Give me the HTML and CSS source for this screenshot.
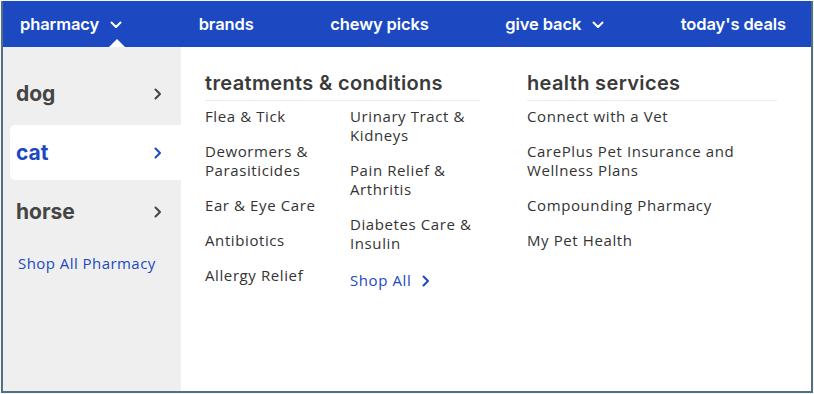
FILE: index.html
```html
<!DOCTYPE html>
<html>
<head>
<meta charset="utf-8">
<link rel="stylesheet" href="styles.css">
</head>
<body>
<div class="frame">
  <nav class="topnav">
    <div class="nav-item active">pharmacy
      <svg class="nav-chev" width="12" height="8" viewBox="0 0 12 8"><path d="M1.5 1.5 L6 6 L10.5 1.5" fill="none" stroke="#fff" stroke-width="2" stroke-linecap="round" stroke-linejoin="round"/></svg>
      <span class="caret"></span>
    </div>
    <div class="nav-item">brands</div>
    <div class="nav-item">chewy picks</div>
    <div class="nav-item">give back
      <svg class="nav-chev" width="12" height="8" viewBox="0 0 12 8"><path d="M1.5 1.5 L6 6 L10.5 1.5" fill="none" stroke="#fff" stroke-width="2" stroke-linecap="round" stroke-linejoin="round"/></svg>
    </div>
    <div class="nav-item">today's deals</div>
  </nav>
  <div class="panel">
    <aside class="sidebar">
      <div class="pet">dog
        <svg width="8" height="12" viewBox="0 0 8 12"><path d="M1.5 1.5 L6 6 L1.5 10.5" fill="none" stroke="currentColor" stroke-width="2" stroke-linecap="round" stroke-linejoin="round"/></svg>
      </div>
      <div class="pet selected">cat
        <svg width="8" height="12" viewBox="0 0 8 12"><path d="M1.5 1.5 L6 6 L1.5 10.5" fill="none" stroke="currentColor" stroke-width="2" stroke-linecap="round" stroke-linejoin="round"/></svg>
      </div>
      <div class="pet">horse
        <svg width="8" height="12" viewBox="0 0 8 12"><path d="M1.5 1.5 L6 6 L1.5 10.5" fill="none" stroke="currentColor" stroke-width="2" stroke-linecap="round" stroke-linejoin="round"/></svg>
      </div>
      <a class="shop-pharmacy">Shop All Pharmacy</a>
    </aside>
    <section class="content">
      <div class="group treatments">
        <h2 class="group-title">treatments &amp; conditions</h2>
        <div class="cols">
          <ul class="links col-a">
            <li>Flea &amp; Tick</li>
            <li>Dewormers &amp; Parasiticides</li>
            <li>Ear &amp; Eye Care</li>
            <li>Antibiotics</li>
            <li>Allergy Relief</li>
          </ul>
          <ul class="links col-b">
            <li>Urinary Tract &amp; Kidneys</li>
            <li>Pain Relief &amp; Arthritis</li>
            <li>Diabetes Care &amp; Insulin</li>
            <li class="shop-all">Shop All
              <svg width="8" height="12" viewBox="0 0 8 12"><path d="M1.5 1.5 L6 6 L1.5 10.5" fill="none" stroke="currentColor" stroke-width="2" stroke-linecap="round" stroke-linejoin="round"/></svg>
            </li>
          </ul>
        </div>
      </div>
      <div class="group services">
        <h2 class="group-title">health services</h2>
        <ul class="links">
          <li>Connect with a Vet</li>
          <li>CarePlus Pet Insurance and Wellness Plans</li>
          <li>Compounding Pharmacy</li>
          <li>My Pet Health</li>
        </ul>
      </div>
    </section>
  </div>
</div>
</body>
</html>
```
FILE: styles.css
```css
* { box-sizing: border-box; }
html, body { margin: 0; padding: 0; background: #f4f6f7; }
body { font-family: "Open Sans", "Liberation Sans", sans-serif; }

.frame {
  width: 812px;
  height: 392px;
  margin: 1px 0 0 1px;
  border: 2px solid #52707e;
  border-top: none;
  background: #fff;
  display: flex;
  flex-direction: column;
  overflow: hidden;
}

.topnav {
  height: 46px;
  flex: none;
  background: #1c49c2;
  display: flex;
  align-items: center;
  justify-content: space-between;
  padding: 0 25px 0 17px;
}
.nav-item {
  position: relative;
  color: #fff;
  font-family: Inter, "Open Sans", sans-serif;
  font-weight: 600;
  font-size: 16.5px;
  letter-spacing: -0.1px;
  display: flex;
  align-items: center;
  gap: 11px;
  height: 46px;
  padding-bottom: 1px;
}
.nav-chev { margin-top: 2px; }
.caret {
  position: absolute;
  bottom: 0;
  right: -3px;
  width: 0;
  height: 0;
  border-left: 8px solid transparent;
  border-right: 8px solid transparent;
  border-bottom: 8px solid #fff;
}

.panel {
  flex: 1;
  display: flex;
}

.sidebar {
  width: 178px;
  flex: none;
  background: #efefef;
  padding: 19px 0 0 7px;
  display: flex;
  flex-direction: column;
  gap: 4px;
}
.pet {
  height: 55px;
  display: flex;
  align-items: center;
  justify-content: space-between;
  padding: 0 19px 0 6px;
  font-family: Inter, "Open Sans", sans-serif;
  font-weight: 700;
  font-size: 21px;
  color: #454545;
  border-radius: 5px 0 0 5px;
}
.pet svg { color: #454545; }
.pet.selected { background: #fff; color: #1c49c2; }
.pet.selected svg { color: #1c49c2; }
.shop-pharmacy {
  margin-top: 10px;
  padding-left: 8px;
  font-size: 15px;
  line-height: 20px;
  letter-spacing: 0.45px;
  color: #1c49c2;
}

.content {
  flex: 1;
  display: flex;
  padding: 24px 0 0 24px;
  gap: 47px;
}
.group-title {
  margin: 0;
  font-family: Inter, "Open Sans", sans-serif;
  font-weight: 600;
  font-size: 20px;
  line-height: 24px;
  color: #3a3a3a;
  padding-bottom: 5px;
  border-bottom: 1px solid #ececec;
  letter-spacing: 0.35px;
}
.treatments { width: 275px; }
.services { width: 250px; }
.cols { display: flex; }
.col-a { width: 145px; }
.col-b { width: 130px; }
.links {
  list-style: none;
  margin: 0;
  padding: 6px 0 0 0;
  display: flex;
  flex-direction: column;
  gap: 16px;
}
.links li {
  font-size: 15px;
  line-height: 19px;
  letter-spacing: 0.6px;
  color: #333;
}
.links li.shop-all {
  color: #1c49c2;
  margin-top: 2px;
  display: flex;
  align-items: center;
  gap: 11px;
}
```
